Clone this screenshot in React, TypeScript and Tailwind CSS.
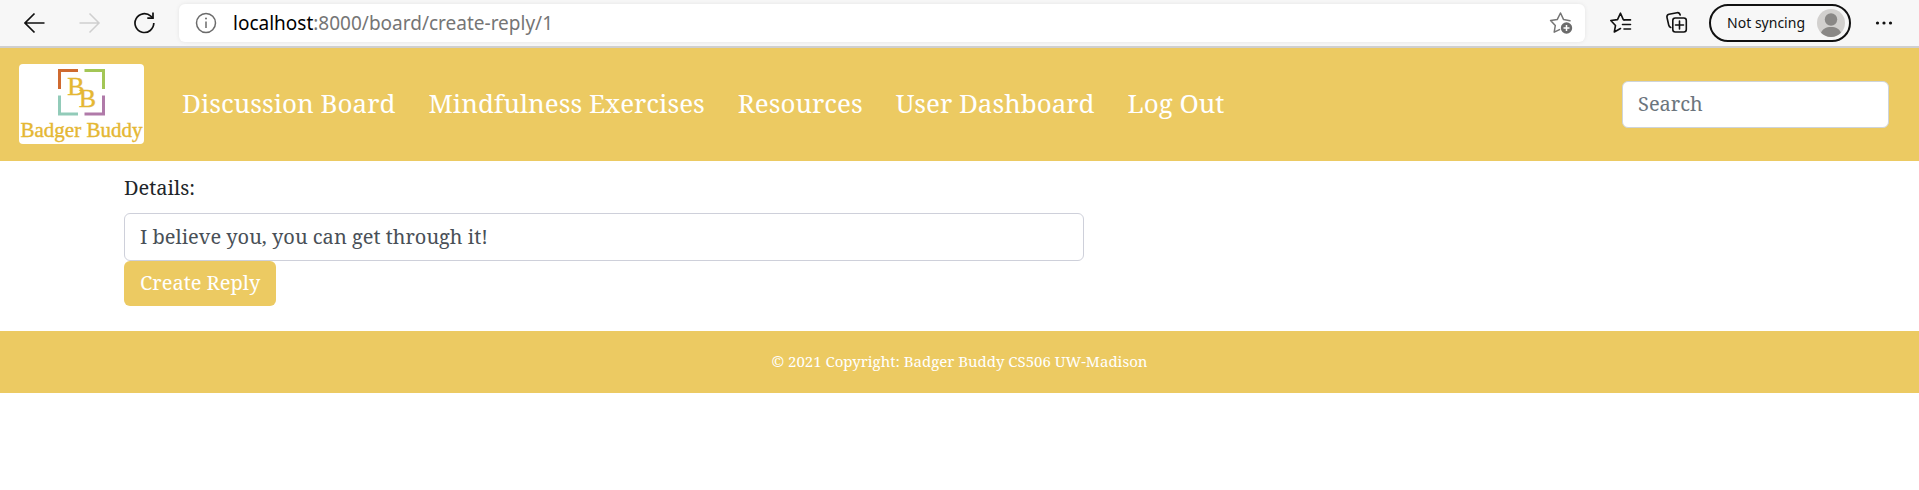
import React from "react";

const navLinks = ["Discussion Board", "Mindfulness Exercises", "Resources", "User Dashboard", "Log Out"];

function BackIcon() {
  return (
    <svg width="22" height="22" viewBox="0 0 22 22" fill="none" stroke="currentColor" strokeWidth="1.7" aria-hidden="true">
      <path d="M20.500 11H1M10.500 1.500 1 11l9.500 9.500" />
    </svg>
  );
}

function ForwardIcon() {
  return (
    <svg width="22" height="22" viewBox="0 0 22 22" fill="none" stroke="currentColor" strokeWidth="1.5" aria-hidden="true">
      <path d="M0.500 11H20M10.500 1.500 20 11l-9.500 9.500" />
    </svg>
  );
}

function RefreshIcon() {
  return (
    <svg width="22" height="22" viewBox="0 0 22 22" fill="none" stroke="currentColor" strokeWidth="1.7" aria-hidden="true">
      <path d="M19.800 11A9.400 9.400 0 1 1 16.800 4.200L19 6" />
      <path d="M19 0.500V6.200H13.300" />
    </svg>
  );
}

function InfoIcon() {
  return (
    <svg width="22" height="22" viewBox="0 0 22 22" fill="none" stroke="#6b6b6b" strokeWidth="1.500" aria-hidden="true">
      <circle cx="11" cy="11" r="9.500" />
      <path d="M11 9.500v6.500" />
      <circle cx="11" cy="6.600" r="1" fill="#6b6b6b" stroke="none" />
    </svg>
  );
}

function AddFavoriteIcon() {
  return (
    <svg width="24" height="24" viewBox="0 0 24 24" fill="none" aria-hidden="true">
      <path d="M21 9.800 14.600 8.600 11.500 2 8.200 8.600 1.600 9.600 6.300 14.500 5.200 21.200 10.500 18.600" stroke="#757575" strokeWidth="1.500" strokeLinejoin="round" strokeLinecap="round" />
      <circle cx="17.500" cy="17" r="5.700" fill="#6b6b6b" />
      <path d="M17.500 14v6M14.500 17h6" stroke="#fff" strokeWidth="1.500" />
    </svg>
  );
}

function FavoritesIcon() {
  return (
    <svg width="24" height="24" viewBox="0 0 24 24" fill="none" stroke="#111" strokeWidth="1.600" strokeLinejoin="round" strokeLinecap="round" aria-hidden="true">
      <path d="M15.500 8.700 14.300 8.600 11.500 2.200 8.500 8.600 1.800 9.500 6.500 14.500 5.300 21 11.500 17.500" />
      <path d="M15 8.900h6.500M13.500 13.500h8M15 18h6.500" />
    </svg>
  );
}

function CollectionsIcon() {
  return (
    <svg width="24" height="24" viewBox="0 0 24 24" fill="none" stroke="#111" strokeWidth="1.600" strokeLinecap="round" strokeLinejoin="round" aria-hidden="true">
      <path d="M5.800 16.500C4.500 16 4 15.200 3.700 14L2 6.500C1.600 4.700 2.500 3.700 4 3.300L12 1.700C13.800 1.400 14.700 2.200 15.200 4" />
      <rect x="7.800" y="7" width="13.500" height="14" rx="2.500" />
      <path d="M14.500 10v8M10.500 14h8" />
    </svg>
  );
}

function Avatar() {
  return (
    <svg width="28" height="28" viewBox="0 0 28 28" aria-hidden="true">
      <circle cx="14" cy="14" r="14" fill="#d2d0ce" />
      <circle cx="14" cy="10.500" r="6.200" fill="#8a8886" />
      <path d="M4 23.800C5.500 20 9 18 14 18s8.500 2 10 5.800A14 14 0 0 1 4 23.800Z" fill="#8a8886" />
    </svg>
  );
}

function MoreIcon() {
  return (
    <svg width="18" height="6" viewBox="0 0 18 6" fill="#111" aria-hidden="true">
      <circle cx="2.500" cy="3" r="1.600" />
      <circle cx="9" cy="3" r="1.600" />
      <circle cx="15.500" cy="3" r="1.600" />
    </svg>
  );
}

function Logo() {
  return (
    <svg width="125" height="80" viewBox="0 0 125 80" className="rounded bg-white" role="img" aria-label="Badger Buddy">
      <g fill="none" strokeWidth="3">
        <path d="M40.500 25V6.500H59" stroke="#cf6a30" />
        <path d="M65.500 6.500H84.500V25" stroke="#a3c656" />
        <path d="M40.500 31.500V50H59" stroke="#92cbb9" />
        <path d="M65.500 50H84.500V31.500" stroke="#b07aa9" />
      </g>
      <g fill="#e5b733" stroke="#e5b733" strokeWidth="0.400" fontFamily="'Liberation Serif', serif" textAnchor="middle">
        <text x="57" y="31" fontSize="26">B</text>
        <text x="68.500" y="43" fontSize="26">B</text>
        <text x="62.500" y="73" fontSize="21">Badger Buddy</text>
      </g>
    </svg>
  );
}

function BrowserBar() {
  return (
    <div className="flex h-12 items-center border-b-2 border-[#cfcfcf] bg-[#f7f7f7] pr-[26px] pl-6 font-['Noto_Sans',sans-serif]">
      <div className="flex items-center gap-[33px] pr-[23px] text-[#111]">
        <button aria-label="Back"><BackIcon /></button>
        <button aria-label="Forward" disabled className="text-[#cfcfcf]"><ForwardIcon /></button>
        <button aria-label="Refresh"><RefreshIcon /></button>
      </div>
      <div className="flex h-[38px] min-w-0 flex-1 items-center rounded-md bg-white pr-3 pl-4 shadow-[0_0_4px_rgba(0,0,0,0.08)]">
        <InfoIcon />
        <p className="ml-4 flex-1 text-[19px] text-[#757575]">
          <span className="text-black">localhost</span>:8000/board/create-reply/1
        </p>
        <button aria-label="Add to favorites"><AddFavoriteIcon /></button>
      </div>
      <div className="ml-6 flex items-center gap-8">
        <button aria-label="Favorites"><FavoritesIcon /></button>
        <button aria-label="Collections"><CollectionsIcon /></button>
      </div>
      <button className="mr-6 ml-5 flex h-[38px] items-center gap-3 rounded-full border-2 border-[#111] pr-1 pl-4 text-[14px] text-[#111]">
        Not syncing
        <Avatar />
      </button>
      <button aria-label="Settings and more"><MoreIcon /></button>
    </div>
  );
}

export default function App() {
  return (
    <div className="bg-white font-['Noto_Serif','DejaVu_Serif_Condensed',serif] text-[20px] leading-[30px] text-[#212529]">
      <BrowserBar />
      <header className="flex items-center bg-[#ecca62] pt-4 pb-[17px] pr-[30px] pl-[19px]">
        <a href="#home" className="block"><Logo /></a>
        <nav className="ml-[38px] flex flex-1 gap-[33px] pb-0.5 text-[26px] text-white">
          {navLinks.map((label) => (
            <a key={label} href="#nav" className="whitespace-nowrap">{label}</a>
          ))}
        </nav>
        <input type="search" aria-label="Search" placeholder="Search" className="h-[47px] w-[267px] rounded-md border border-[#ced4da] bg-white px-[15px] pb-0.5 placeholder:text-[#6c757d]" />
      </header>
      <main className="px-[124px] pt-3 pb-[25px]">
        <form>
          <label htmlFor="details" className="mb-[10px] block">Details:</label>
          <input id="details" type="text" defaultValue="I believe you, you can get through it!" className="block h-12 w-full max-w-[960px] rounded-md border border-[#ced0da] px-[15px] pb-0.5 text-[#495057]" />
          <button type="button" className="block h-[45px] rounded-md bg-[#ecca62] px-4 pb-0.5 text-white">Create Reply</button>
        </form>
      </main>
      <footer className="bg-[#ecca62] pt-[15px] pb-[17px] text-center text-[15px] text-white">© 2021 Copyright: Badger Buddy CS506 UW-Madison</footer>
    </div>
  );
}
